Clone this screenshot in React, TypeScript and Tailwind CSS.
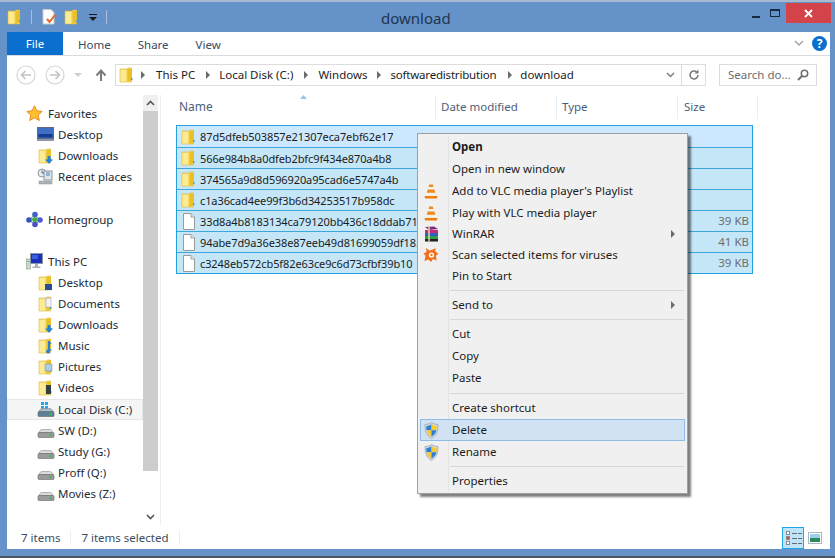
import React from "react";

function Folder({ over }: { over?: React.ReactNode }) {
  return (
    <svg width="16" height="16" viewBox="0 0 16 16" className="shrink-0">
      <path d="M1 2h7l1 -1h3.500v14H1z" fill="#f5dc6e" stroke="#d8b53e" strokeWidth=".6" />
      <path d="M8 2.500L13 1v12.500L8 15z" fill="#e9bf2a" />
      <path d="M1.500 3h5.800v11.500H1.500z" fill="#fbeb95" />
      <path d="M7.300 3h1.200v11.500H7.300z" fill="#f6d857" />
      <path d="M12 11h1.500v2H12z" fill="#4aa3d8" />
      {over}
    </svg>
  );
}
function FileIcon() {
  return (
    <svg width="16" height="17" viewBox="0 0 16 17" className="shrink-0">
      <path d="M2.500 .5h7.500l3.500 3.500v12.500h-11z" fill="#fff" stroke="#9a9a9a" />
      <path d="M10 .5v3.500h3.500" fill="#eee" stroke="#9a9a9a" />
    </svg>
  );
}
function Drive({ win }: { win?: boolean }) {
  return (
    <svg width="18" height="18" viewBox="0 0 18 18" className="shrink-0">
      {win && (
        <g fill="#1ba6ee">
          <path d="M4 1h3v3H4zM8 1h3v3H8zM4 5h3v3H4zM8 5h3v3H8z" />
        </g>
      )}
      <path d="M2 10.500q1 -3 3 -3h8q2 0 3 3z" fill={win ? "#a9bccb" : "#dcdcdc"} stroke="#8b8b8b" strokeWidth=".6" />
      <rect x="1" y="10.500" width="16" height="5" rx="1" fill={win ? "#5b7f93" : "#9b9b9b"} stroke="#666" strokeWidth=".6" />
      <rect x="12.500" y="12" width="2.500" height="2" fill="#35c24a" />
    </svg>
  );
}
function Star() {
  return (
    <svg width="17" height="17" viewBox="0 0 17 17" className="shrink-0">
      <path d="M8.500 .8l2.300 5 5.400 .6 -4 3.700 1.100 5.400 -4.800 -2.700 -4.800 2.700 1.100 -5.400 -4 -3.700 5.400 -.6z" fill="#fdc02f" stroke="#ee8a1c" strokeWidth="1" />
    </svg>
  );
}
function Monitor() {
  return (
    <svg width="17" height="15" viewBox="0 0 17 15" className="shrink-0">
      <rect x=".5" y=".5" width="16" height="11" fill="#3f6fc4" stroke="#5d6b80" />
      <rect x="1.500" y="7" width="14" height="3.500" fill="#163c92" />
      <path d="M0 12h17v2H0z" fill="#8b97a8" />
    </svg>
  );
}
function Recent() {
  return (
    <svg width="17" height="17" viewBox="0 0 17 17" className="shrink-0">
      <circle cx="5" cy="5" r="4" fill="#e8edf1" stroke="#8d979f" />
      <path d="M5 2.500V5h2" fill="none" stroke="#56616a" />
      <rect x="7" y="3" width="8" height="9" fill="#dfe6ec" stroke="#8d979f" />
      <path d="M9 5h4M9 7h4" stroke="#3d83c4" />
      <path d="M2 13h13v3H2z" fill="#aab3ba" stroke="#8d979f" strokeWidth=".5" />
    </svg>
  );
}
function Homegroup() {
  return (
    <svg width="17" height="17" viewBox="0 0 17 17" className="shrink-0">
      <path d="M8.500 4L3 9l6 4.500L14 9z" fill="none" stroke="#6f7fb0" />
      <circle cx="9" cy="3.500" r="2.800" fill="#3e62c9" />
      <circle cx="3" cy="9" r="2.800" fill="#3454bb" />
      <circle cx="14" cy="9" r="2.800" fill="#4a5fcb" />
      <circle cx="9" cy="13.500" r="2.800" fill="#4b51c0" />
      <circle cx="8.700" cy="8.500" r="2.600" fill="#3fae42" />
    </svg>
  );
}
function ThisPC() {
  return (
    <svg width="17" height="17" viewBox="0 0 17 17" className="shrink-0">
      <rect x=".5" y="6" width="4" height="10" fill="#cfd6cf" stroke="#8a9a8a" strokeWidth=".6" />
      <rect x="1.500" y="8" width="2" height="1" fill="#4fbf6a" />
      <rect x="4.500" y=".5" width="12" height="10" fill="#1d2fb8" stroke="#8b97a8" />
      <rect x="6" y="2" width="6" height="4" fill="#3c5fe0" />
      <path d="M9 11h3v2.500h2.500v1.500h-8v-1.500H9z" fill="#a8b2bd" />
    </svg>
  );
}
function Cone() {
  return (
    <svg width="14" height="16" viewBox="0 0 14 16">
      <path d="M5.500 1h3l4 12H1.500z" fill="#f4f1ea" />
      <path d="M5.300 1.500h3.400l.8 2.600H4.500zM3.700 6.500h6.600l1 3.200H2.700z" fill="#ef8a17" />
      <path d="M.5 13h13l-.6 2.500H1.100z" fill="#ee7d0e" />
    </svg>
  );
}
function Rar() {
  return (
    <svg width="15" height="16" viewBox="0 0 15 16">
      <path d="M1 1l9 -.5 4 2.500 -9 1z" fill="#7a2f80" />
      <path d="M1 4h13v3H1z" fill="#c72c7c" />
      <path d="M1 7h13v3H1z" fill="#2f5fc0" />
      <path d="M1 10h13v3H1z" fill="#2e9b47" />
      <path d="M1 13h13v2.500H1z" fill="#222" />
      <path d="M5 1v14.500" stroke="#e8d9a0" strokeWidth="1.500" />
    </svg>
  );
}
function Avast() {
  return (
    <svg width="16" height="16" viewBox="0 0 16 16">
      <path d="M3 1l3.500 2.500L11 2l1.500 -1 -.2 3.500L15.500 7l-2.500 1.500 .5 5 -3.500 -1.500L8 15l-2.500 -2.500L1.500 14 2.500 9 .5 6.500 3.500 5z" fill="#f1701d" />
      <circle cx="8.500" cy="8" r="2.600" fill="#fff" />
      <circle cx="8.500" cy="8" r="1.200" fill="#f1701d" />
    </svg>
  );
}
function Shield() {
  return (
    <svg width="15" height="17" viewBox="0 0 15 17">
      <path d="M7.500 .5c2 1.300 4 1.800 6.500 2 .3 6 -1.500 11 -6.500 14C2.500 13.500 .7 8.500 1 2.500c2.500 -.2 4.500 -.7 6.500 -2z" fill="#d4d8dc" stroke="#8e969e" strokeWidth=".6" />
      <path d="M7.500 2.300v6H2.500c-.2 -1.400 -.3 -2.600 -.2 -4 2 -.2 3.600 -.9 5.200 -2z" fill="#2b7fd8" />
      <path d="M7.500 2.300c1.600 1.100 3.200 1.800 5.200 2 .1 1.400 0 2.600 -.2 4H7.500z" fill="#f6cb2b" />
      <path d="M2.500 8.300h5v6.400c-2.800 -1.700 -4.300 -3.900 -5 -6.400z" fill="#f6cb2b" />
      <path d="M7.500 8.300h5c-.7 2.500 -2.200 4.700 -5 6.400z" fill="#2b7fd8" />
    </svg>
  );
}
function Arrow() {
  return (
    <svg width="6" height="8" viewBox="0 0 6 8" className="shrink-0">
      <path d="M1 0l4 4 -4 4z" fill="#6b6b6b" />
    </svg>
  );
}
function Nav({ dir }: { dir: "l" | "r" }) {
  return (
    <svg width="20" height="20" viewBox="0 0 20 20">
      <circle cx="10" cy="10" r="9" fill="#fff" stroke="#d5d5d5" strokeWidth="1.200" />
      <path d={dir === "l" ? "M15 10H6M9.500 6L5.500 10l4 4" : "M5 10h9M10.500 6l4 4 -4 4"} fill="none" stroke="#c4c4c4" strokeWidth="1.600" />
    </svg>
  );
}

const dl = <path d="M9.500 8h3v3.500h2.500l-4 4.300 -4 -4.300h2.500z" fill="#1b82dd" />;

type NavEntry = { label: string; icon: React.ReactNode; indent?: boolean; active?: boolean };
function NavRow({ label, icon, indent, active }: NavEntry) {
  return (
    <div
      className={`flex items-center h-[21px] border ${indent ? "pl-[29px] gap-[4px]" : "pl-[18px] gap-[5px]"} ${
        active ? "bg-[#f5f5f5] border-[#e6e6e6]" : "border-transparent"
      }`}
    >
      <span className="w-[17px] flex justify-center items-center">{icon}</span>
      <span className="text-[#222a35] whitespace-nowrap">{label}</span>
    </div>
  );
}

type FileRow = { name: string; folder?: boolean; size?: string; active?: boolean };
const rows: FileRow[] = [
  { name: "87d5dfeb503857e21307eca7ebf62e17", folder: true, active: true },
  { name: "566e984b8a0dfeb2bfc9f434e870a4b8", folder: true },
  { name: "374565a9d8d596920a95cad6e5747a4b", folder: true },
  { name: "c1a36cad4ee99f3b6d34253517b958dc", folder: true },
  { name: "33d8a4b8183134ca79120bb436c18ddab71", size: "39 KB" },
  { name: "94abe7d9a36e38e87eeb49d81699059df18.", size: "41 KB" },
  { name: "c3248eb572cb5f82e63ce9c6d73cfbf39b10", size: "39 KB" },
];

function MenuItem({
  label,
  icon,
  bold,
  sub,
  active,
  short,
}: {
  label: string;
  icon?: React.ReactNode;
  bold?: boolean;
  sub?: boolean;
  active?: boolean;
  short?: boolean;
}) {
  return (
    <div
      className={`flex items-center border mx-[2px] ${short ? "h-[21px] pb-[2px]" : "h-[22px]"} ${
        active ? "bg-[#d1e2f2] border-[#8fbde8]" : "border-transparent"
      }`}
    >
      <span className="w-[20px] flex justify-center items-center shrink-0">{icon}</span>
      <span className={`ml-[11px] flex-1 text-[#1c1c1c] whitespace-nowrap ${bold ? "font-bold" : ""}`}>{label}</span>
      {sub && (
        <span className="mr-[8px]">
          <Arrow />
        </span>
      )}
    </div>
  );
}
function MenuSep({ h }: { h: string }) {
  return (
    <div className={`flex items-center ml-[32px] mr-[3px] ${h}`}>
      <div className="h-px w-full bg-[#d7d7d7]" />
    </div>
  );
}

export default function App() {
  return (
    <div className="relative w-[835px] h-[558px] overflow-hidden bg-[#6592c9] flex flex-col font-['Noto_Sans',sans-serif] text-[11.5px] leading-none">
      <div className="h-[2px] bg-[#a9b9cf] shrink-0" />
      {/* title bar */}
      <div className="h-[30px] flex items-center shrink-0 relative">
        <div className="flex items-center pl-[7px]">
          <Folder />
          <div className="ml-[8px] w-px h-[14px] bg-[#a8c0de]" />
          <svg width="15" height="16" viewBox="0 0 15 16" className="ml-[10px]">
            <path d="M1 .5h8l3 3v11.500H1z" fill="#fdfdfd" stroke="#c9c9c9" />
            <path d="M5 10l2.500 3L13 6" fill="none" stroke="#e8662a" strokeWidth="2" />
          </svg>
          <span className="ml-[7px]">
            <Folder />
          </span>
          <svg width="8" height="7" viewBox="0 0 8 7" className="ml-[9px]">
            <path d="M0 0h8v1H0zM0 3h8L4 7z" fill="#1a1a1a" />
          </svg>
          <div className="ml-[9px] w-px h-[14px] bg-[#a8c0de]" />
        </div>
        <div className="absolute left-[381px] top-[7px] text-[15px] leading-[18px] text-[#1f3550]">download</div>
        <div className="ml-auto flex items-start h-full pt-[1px] pr-[4px]">
          <div className="w-[21px] h-[20px] flex items-end pb-[5px] justify-center">
            <div className="w-[8px] h-[2px] bg-[#1a2a3e]" />
          </div>
          <div className="w-[18px] h-[20px] flex items-center justify-center">
            <div className="w-[10px] h-[8px] border border-t-2 border-[#1a2a3e]" />
          </div>
          <div className="ml-[2px] w-[45px] h-[20px] bg-[#d5434a] flex items-center justify-center">
            <svg width="9" height="9" viewBox="0 0 9 9">
              <path d="M1 1l7 7M8 1L1 8" stroke="#fff" strokeWidth="1.800" />
            </svg>
          </div>
        </div>
      </div>
      {/* window */}
      <div className="mx-[7px] mr-[5px] h-[517px] bg-white flex flex-col shrink-0 text-[#222]">
        <div className="h-[24px] flex items-stretch border-b border-[#dadbdc] shrink-0">
          <div className="w-[56px] bg-[#0a6fcf] text-white flex items-center justify-center pt-[1px]">File</div>
          <div className="flex items-center pl-[15px] pt-[3px] gap-[27px] text-[#3b4b62]">
            <span>Home</span>
            <span>Share</span>
            <span>View</span>
          </div>
          <div className="ml-auto flex items-center pr-[3px] gap-[8px]">
            <svg width="10" height="7" viewBox="0 0 10 7">
              <path d="M1 1l4 4 4 -4" fill="none" stroke="#a5a5a5" strokeWidth="1.500" />
            </svg>
            <span className="w-[15px] h-[15px] rounded-full bg-[#0a6fcf] text-white font-bold text-[12px] flex items-center justify-center">?</span>
          </div>
        </div>
        {/* address */}
        <div className="h-[39px] flex items-center shrink-0 pl-[9px] pb-[1px]">
          <Nav dir="l" />
          <span className="ml-[9px]">
            <Nav dir="r" />
          </span>
          <svg width="8" height="5" viewBox="0 0 8 5" className="ml-[9px]">
            <path d="M0 0h8L4 4z" fill="#cfcfcf" />
          </svg>
          <svg width="12" height="13" viewBox="0 0 12 13" className="ml-[13px]">
            <path d="M6 12V2M1.500 6.500L6 1.500l4.500 5" fill="none" stroke="#7a7a7a" strokeWidth="2" />
          </svg>
          <div className="ml-[8px] w-[591px] h-[22px] border border-[#dcdcdc] flex items-center">
            <span className="ml-[3px]">
              <Folder />
            </span>
            <span className="ml-[5px]">
              <Arrow />
            </span>
            <span className="ml-[10px] text-[#1c1c1c]">This PC</span>
            <span className="ml-[10px]">
              <Arrow />
            </span>
            <span className="ml-[8px] text-[#1c1c1c]">Local Disk (C:)</span>
            <span className="ml-[10px]">
              <Arrow />
            </span>
            <span className="ml-[9px] text-[#1c1c1c]">Windows</span>
            <span className="ml-[8px]">
              <Arrow />
            </span>
            <span className="ml-[9px] text-[#1c1c1c] tracking-[-0.2px]">softwaredistribution</span>
            <span className="ml-[11px]">
              <Arrow />
            </span>
            <span className="ml-[7px] text-[#1c1c1c]">download</span>
            <div className="ml-auto h-full flex items-center">
              <svg width="9" height="6" viewBox="0 0 9 6" className="mr-[6px]">
                <path d="M1 1l3.500 3.500L8 1" fill="none" stroke="#7e7e7e" strokeWidth="1.500" />
              </svg>
              <div className="w-[24px] h-full border-l border-[#dcdcdc] flex items-center justify-center">
                <svg width="12" height="12" viewBox="0 0 12 12">
                  <path d="M10 6a4 4 0 1 1 -1.300 -3" fill="none" stroke="#7a7a7a" strokeWidth="1.600" />
                  <path d="M10.500 .5v4h-4z" fill="#7a7a7a" />
                </svg>
              </div>
            </div>
          </div>
          <div className="ml-[13px] w-[98px] h-[22px] border border-[#dcdcdc] flex items-center pl-[8px] text-[#6d6d6d]">
            <span>Search do...</span>
            <svg width="12" height="12" viewBox="0 0 12 12" className="ml-auto mr-[7px]">
              <circle cx="7.500" cy="4.500" r="3.200" fill="none" stroke="#6f6f6f" strokeWidth="1.500" />
              <path d="M5 7l-4 4" stroke="#6f6f6f" strokeWidth="2" />
            </svg>
          </div>
        </div>
        {/* main */}
        <div className="flex-1 flex min-h-0">
          {/* nav */}
          <div className="w-[136px] shrink-0 pt-[8px]">
            <NavRow label="Favorites" icon={<Star />} />
            <NavRow indent label="Desktop" icon={<Monitor />} />
            <NavRow indent label="Downloads" icon={<Folder over={dl} />} />
            <NavRow indent label="Recent places" icon={<Recent />} />
            <div className="h-[22px]" />
            <NavRow label="Homegroup" icon={<Homegroup />} />
            <div className="h-[21px]" />
            <NavRow label="This PC" icon={<ThisPC />} />
            <NavRow indent label="Desktop" icon={<Folder over={<rect x="7" y="9" width="7" height="6" fill="#2b4a9c" />} />} />
            <NavRow indent label="Documents" icon={<Folder over={<rect x="8" y="2" width="5" height="9" fill="#f3f3f3" stroke="#99a" strokeWidth=".5" />} />} />
            <NavRow indent label="Downloads" icon={<Folder over={dl} />} />
            <NavRow indent label="Music" icon={<Folder over={<path d="M10 3h1.500l2.500 3 -2 -.5V13a2 2 0 1 1 -2 -1.500z" fill="#2a7fd4" />} />} />
            <NavRow indent label="Pictures" icon={<Folder over={<rect x="7" y="5" width="7" height="7" fill="#a9cfe6" stroke="#789" strokeWidth=".5" />} />} />
            <NavRow indent label="Videos" icon={<Folder over={<rect x="8" y="5" width="5" height="9" fill="#333d48" />} />} />
            <div className="pt-[1px]">
              <NavRow label="Local Disk (C:)" icon={<Drive win />} indent active />
            </div>
            <NavRow indent label="SW (D:)" icon={<Drive />} />
            <NavRow indent label="Study (G:)" icon={<Drive />} />
            <NavRow indent label="Proff (Q:)" icon={<Drive />} />
            <NavRow indent label="Movies (Z:)" icon={<Drive />} />
          </div>
          {/* scrollbar */}
          <div className="w-[15px] shrink-0 flex flex-col h-[430px] bg-white">
            <div className="h-[16px] bg-[#f0f0f0] flex items-center justify-center">
              <svg width="9" height="6" viewBox="0 0 9 6">
                <path d="M1 5l3.500 -3.500L8 5" fill="none" stroke="#555" strokeWidth="1.600" />
              </svg>
            </div>
            <div className="h-[360px] bg-[#cdcdcd]" />
            <div className="flex-1" />
            <div className="h-[16px] flex items-center justify-center">
              <svg width="9" height="6" viewBox="0 0 9 6">
                <path d="M1 1l3.500 3.500L8 1" fill="none" stroke="#555" strokeWidth="1.600" />
              </svg>
            </div>
          </div>
          <div className="w-[2px] shrink-0" />
          <div className="w-px h-[430px] bg-[#eeeeee] shrink-0" />
          {/* content */}
          <div className="flex-1 flex flex-col pl-[15px] min-w-0">
            <div className="h-[30px] flex shrink-0 relative text-[#4c607a]">
              <div className="w-[259px] pl-[3px] pt-[6px] flex items-start">
                <span className="text-[12px]">Name</span>
              </div>
              <svg width="7" height="4" viewBox="0 0 7 4" className="absolute left-[124px] top-0">
                <path d="M0 4L3.500 0 7 4z" fill="#9cc3e0" />
              </svg>
              <div className="w-[121px] border-l border-[#e5edf5] h-[24px] pl-[5px] pt-[6px]">Date modified</div>
              <div className="w-[121px] border-l border-[#e5edf5] h-[24px] pl-[5px] pt-[6px]">Type</div>
              <div className="w-[81px] border-r border-l border-[#e5edf5] h-[24px] pl-[6px] pt-[6px]">Size</div>
            </div>
            <div className="w-[577px] border border-[#26a0da] flex flex-col">
              {rows.map((r, i) => (
                <div
                  key={r.name}
                  className={`h-[21px] flex items-center ${i > 0 ? "border-t border-[#3ea6dd]" : ""} ${
                    r.active ? "bg-[#cce8ff]" : "bg-[#c4e6f7]"
                  }`}
                >
                  <span className="w-[23px] pl-[4px] flex shrink-0">{r.folder ? <Folder /> : <FileIcon />}</span>
                  <span className="w-[241px] shrink-0 overflow-hidden whitespace-nowrap text-[#1c1c1c] text-[11px] tracking-[-0.1px]">{r.name}</span>
                  <span className="w-[121px] shrink-0 text-[#6d6d6d] whitespace-nowrap">{r.folder ? "9/16/2018 8:38 PM" : ""}</span>
                  <span className="w-[121px] shrink-0 text-[#6d6d6d] whitespace-nowrap">{r.folder ? "File folder" : ""}</span>
                  <span className="w-[66px] shrink-0 text-right text-[#6d6d6d]">{r.size}</span>
                </div>
              ))}
            </div>
          </div>
        </div>
        {/* status */}
        <div className="h-[22px] flex items-center shrink-0 pl-[14px] text-[#3b4b62] relative">
          <span>7 items</span>
          <div className="ml-[10px] w-px h-[14px] bg-[#ececec]" />
          <span className="ml-[10px]">7 items selected</span>
          <div className="ml-[10px] w-px h-[14px] bg-[#ececec]" />
          <div className="ml-auto flex items-center h-full pr-[8px] gap-[4px]">
            <div className="w-[22px] h-full bg-[#c0e3f7] border border-[#1fa6e8] flex flex-col justify-center gap-[1px] pl-[3px]">
              {["#8a8a8a", "#d9453d", "#8a8a8a"].map((c, i) => (
                <div key={i} className="flex items-center gap-[1px]">
                  <div className="w-[4px] h-[4px] bg-white border border-[#8a8a8a]" style={{ backgroundColor: c === "#d9453d" ? c : undefined }} />
                  <div className="w-[5px] h-px bg-[#5d6b7a] ml-[1px]" />
                  <div className="w-[4px] h-px bg-[#5d6b7a]" />
                </div>
              ))}
            </div>
            <svg width="14" height="12" viewBox="0 0 14 12">
              <rect x=".5" y=".5" width="13" height="11" fill="#fff" stroke="#aeb6c2" />
              <rect x="2" y="2" width="10" height="4" fill="#9cd0ea" />
              <rect x="2" y="6" width="10" height="4" fill="#2c8a5a" />
            </svg>
          </div>
        </div>
      </div>
      <div className="flex-1" />
      <div className="h-[2px] bg-[#4a5560] shrink-0" />
      {/* context menu */}
      <div className="absolute left-[417px] top-[133px] w-[271px] h-[361px] bg-[#f0f0f0] border border-[#a0a0a0] shadow-[3px_3px_2px_rgba(0,0,0,0.5)] pt-[2px]">
        <div className="absolute left-[30px] top-[2px] bottom-[2px] w-px bg-[#e2e3e3]" />
        <div className="relative">
          <MenuItem label="Open" bold />
          <MenuItem label="Open in new window" />
          <MenuItem label="Add to VLC media player's Playlist" icon={<Cone />} />
          <MenuItem label="Play with VLC media player" icon={<Cone />} />
          <MenuItem short label="WinRAR" icon={<Rar />} sub />
          <MenuItem short label="Scan selected items for viruses" icon={<Avast />} />
          <MenuItem short label="Pin to Start" />
          <MenuSep h="h-[7px]" />
          <MenuItem label="Send to" sub />
          <MenuSep h="h-[7px]" />
          <MenuItem label="Cut" />
          <MenuItem label="Copy" />
          <MenuItem label="Paste" />
          <MenuSep h="h-[8px]" />
          <MenuItem label="Create shortcut" />
          <MenuItem label="Delete" icon={<Shield />} active />
          <MenuItem label="Rename" icon={<Shield />} />
          <MenuSep h="h-[7px]" />
          <MenuItem label="Properties" />
        </div>
      </div>
    </div>
  );
}
